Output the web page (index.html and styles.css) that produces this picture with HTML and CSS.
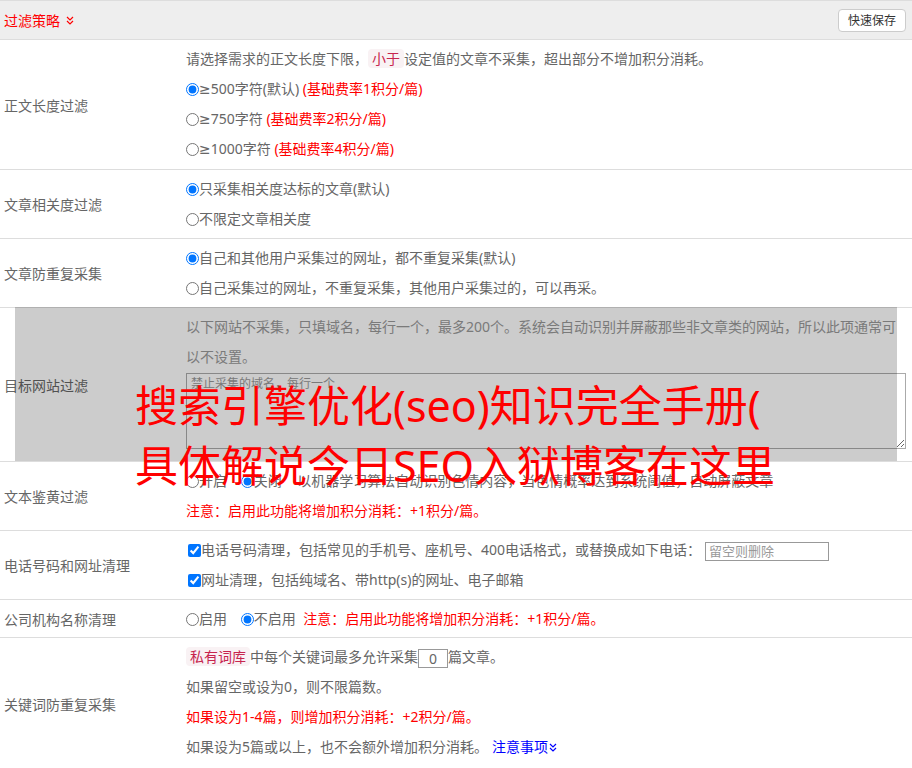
FILE: index.html
```html
<!DOCTYPE html>
<html lang="zh-CN">
<head>
    <meta charset="UTF-8">
    <meta name="viewport" content="width=device-width, initial-scale=1.0">
    <title>过滤策略</title>
    <link rel="stylesheet" href="styles.css">
</head>
<body>
    <div class="panel">
        <div class="panel-head">
            <span class="panel-title">过滤策略
                <svg class="chev" width="8" height="9" viewBox="0 0 8 9"><polyline points="1,1 4,4 7,1"/><polyline points="1,5 4,8 7,5"/></svg>
            </span>
            <button class="btn-save">快速保存</button>
        </div>

        <div class="row row-tall">
            <div class="row-label">正文长度过滤</div>
            <div class="row-body">
                <p>请选择需求的正文长度下限，<code class="tag">小于</code>设定值的文章不采集，超出部分不增加积分消耗。</p>
                <p><label><input class="radio" type="radio" name="len" checked>≥500字符(默认) <span class="warn">(基础费率1积分/篇)</span></label></p>
                <p><label><input class="radio" type="radio" name="len">≥750字符 <span class="warn">(基础费率2积分/篇)</span></label></p>
                <p><label><input class="radio" type="radio" name="len">≥1000字符 <span class="warn">(基础费率4积分/篇)</span></label></p>
            </div>
        </div>

        <div class="row">
            <div class="row-label">文章相关度过滤</div>
            <div class="row-body">
                <p><label><input class="radio" type="radio" name="rel" checked>只采集相关度达标的文章(默认)</label></p>
                <p><label><input class="radio" type="radio" name="rel">不限定文章相关度</label></p>
            </div>
        </div>

        <div class="row">
            <div class="row-label">文章防重复采集</div>
            <div class="row-body">
                <p><label><input class="radio" type="radio" name="dup" checked>自己和其他用户采集过的网址，都不重复采集(默认)</label></p>
                <p><label><input class="radio" type="radio" name="dup">自己采集过的网址，不重复采集，其他用户采集过的，可以再采。</label></p>
            </div>
        </div>

        <div class="row row-target">
            <div class="row-label">目标网站过滤</div>
            <div class="row-body">
                <p class="hint">以下网站不采集，只填域名，每行一个，最多200个。系统会自动识别并屏蔽那些非文章类的网站，所以此项通常可以不设置。</p>
                <textarea class="domains" placeholder="禁止采集的域名，每行一个"></textarea>
            </div>
            <div class="shade"></div>
        </div>

        <div class="row">
            <div class="row-label">文本鉴黄过滤</div>
            <div class="row-body">
                <p>
                    <label class="opt"><input class="radio" type="radio" name="porn">开启</label>
                    <label><input class="radio" type="radio" name="porn" checked>关闭</label>
                    <span class="desc">以机器学习算法自动识别色情内容，当色情概率达到系统阈值，自动屏蔽文章</span>
                </p>
                <p class="warn">注意：启用此功能将增加积分消耗：+1积分/篇。</p>
            </div>
        </div>

        <div class="row">
            <div class="row-label">电话号码和网址清理</div>
            <div class="row-body">
                <p><label><input class="check" type="checkbox" checked>电话号码清理，包括常见的手机号、座机号、400电话格式，或替换成如下电话：</label><input class="phone" type="text" placeholder="留空则删除"></p>
                <p><label><input class="check" type="checkbox" checked>网址清理，包括纯域名、带http(s)的网址、电子邮箱</label></p>
            </div>
        </div>

        <div class="row row-slim">
            <div class="row-label">公司机构名称清理</div>
            <div class="row-body">
                <p>
                    <label class="opt"><input class="radio" type="radio" name="org">启用</label>
                    <label><input class="radio" type="radio" name="org" checked>不启用</label>
                    <span class="warn note">注意：启用此功能将增加积分消耗：+1积分/篇。</span>
                </p>
            </div>
        </div>

        <div class="row row-last">
            <div class="row-label">关键词防重复采集</div>
            <div class="row-body">
                <p><code class="tag">私有词库</code>中每个关键词最多允许采集<input class="count" type="text" value="0">篇文章。</p>
                <p>如果留空或设为0，则不限篇数。</p>
                <p class="warn">如果设为1-4篇，则增加积分消耗：+2积分/篇。</p>
                <p>如果设为5篇或以上，也不会额外增加积分消耗。<a class="more" href="#">注意事项<svg class="chev" width="8" height="9" viewBox="0 0 8 9"><polyline points="1,1 4,4 7,1"/><polyline points="1,5 4,8 7,5"/></svg></a></p>
            </div>
        </div>
    </div>

    <div class="promo">搜索引擎优化(seo)知识完全手册(<br>具体解说今日SEO入狱博客在这里</div>
</body>
</html>
```

FILE: styles.css
```css
* {
    box-sizing: border-box;
}

body {
    margin: 0;
    position: relative;
    font-family: "Noto Sans", "DejaVu Sans", "Noto Sans CJK SC", sans-serif;
    font-size: 14px;
    color: #666;
    background: #fff;
}

.panel-head {
    display: flex;
    align-items: center;
    justify-content: space-between;
    height: 40px;
    padding: 0 6px 0 4px;
    background: #eee;
    border-top: 1px solid #ddd;
    border-bottom: 1px solid #ddd;
}

.panel-title {
    display: flex;
    align-items: center;
    gap: 6px;
    color: #f00;
}

.chev {
    fill: none;
    stroke: currentColor;
    stroke-width: 1.2;
}

.btn-save {
    height: 23px;
    padding: 0 9px;
    font-family: inherit;
    font-size: 12px;
    color: #333;
    background: #fff;
    border: 1px solid #ccc;
    border-radius: 4px;
}

.row {
    display: grid;
    grid-template-columns: 186px 1fr;
    border-bottom: 1px solid #ddd;
}

.row-label {
    display: flex;
    align-items: center;
    padding-left: 4px;
}

.row-body {
    padding: 4px 6px 4px 0;
    line-height: 30px;
}

.row-body p {
    margin: 0;
}

.row-tall .row-body {
    padding-bottom: 5px;
}

.row-slim .row-body {
    padding: 4px 6px 3px 0;
}

.row-last .row-body {
    padding-bottom: 8px;
}

.radio {
    margin: 0;
    vertical-align: -2px;
}

.check {
    margin: 0 0 0 2px;
    vertical-align: -2px;
}

.opt {
    margin-right: 10px;
}

.desc {
    margin-left: 12px;
}

.note {
    margin-left: 4px;
}

.warn {
    color: #f00;
}

.tag {
    padding: 0 4px;
    font-family: inherit;
    font-size: 14px;
    color: #c7254e;
    background: #f9f2f4;
    border-radius: 4px;
}

.phone {
    width: 124px;
    height: 19px;
    padding: 0 3px;
    margin-left: 4px;
    font-family: inherit;
    font-size: 13px;
    color: #666;
    border: 1px solid #999;
    vertical-align: middle;
}

.phone::placeholder {
    color: #999;
}

.count {
    width: 30px;
    height: 19px;
    padding: 0;
    font-family: inherit;
    font-size: 14px;
    color: #666;
    text-align: center;
    border: 1px solid #999;
    vertical-align: middle;
}

.more {
    margin-left: 4px;
    color: #00f;
    text-decoration: none;
}

.more .chev {
    margin-left: 1px;
}

/* 目标网站那一行盖着一层灰 */
.row-target {
    position: relative;
}

.hint {
    color: #999;
}

.domains {
    display: block;
    width: 100%;
    height: 76px;
    margin: 1px 0 8px;
    padding: 2px 4px;
    font-family: inherit;
    font-size: 12px;
    line-height: 16px;
    background: transparent;
    border: 1px solid #aaa;
}

.domains::placeholder {
    color: #999;
}

.shade {
    position: absolute;
    top: -1px;
    bottom: 0;
    left: 15px;
    right: 15px;
    background: rgba(0, 0, 0, 0.2);
}

.promo {
    position: absolute;
    left: 135px;
    top: 376px;
    font-size: 43px;
    line-height: 60px;
    color: #f00;
    white-space: nowrap;
}
```
